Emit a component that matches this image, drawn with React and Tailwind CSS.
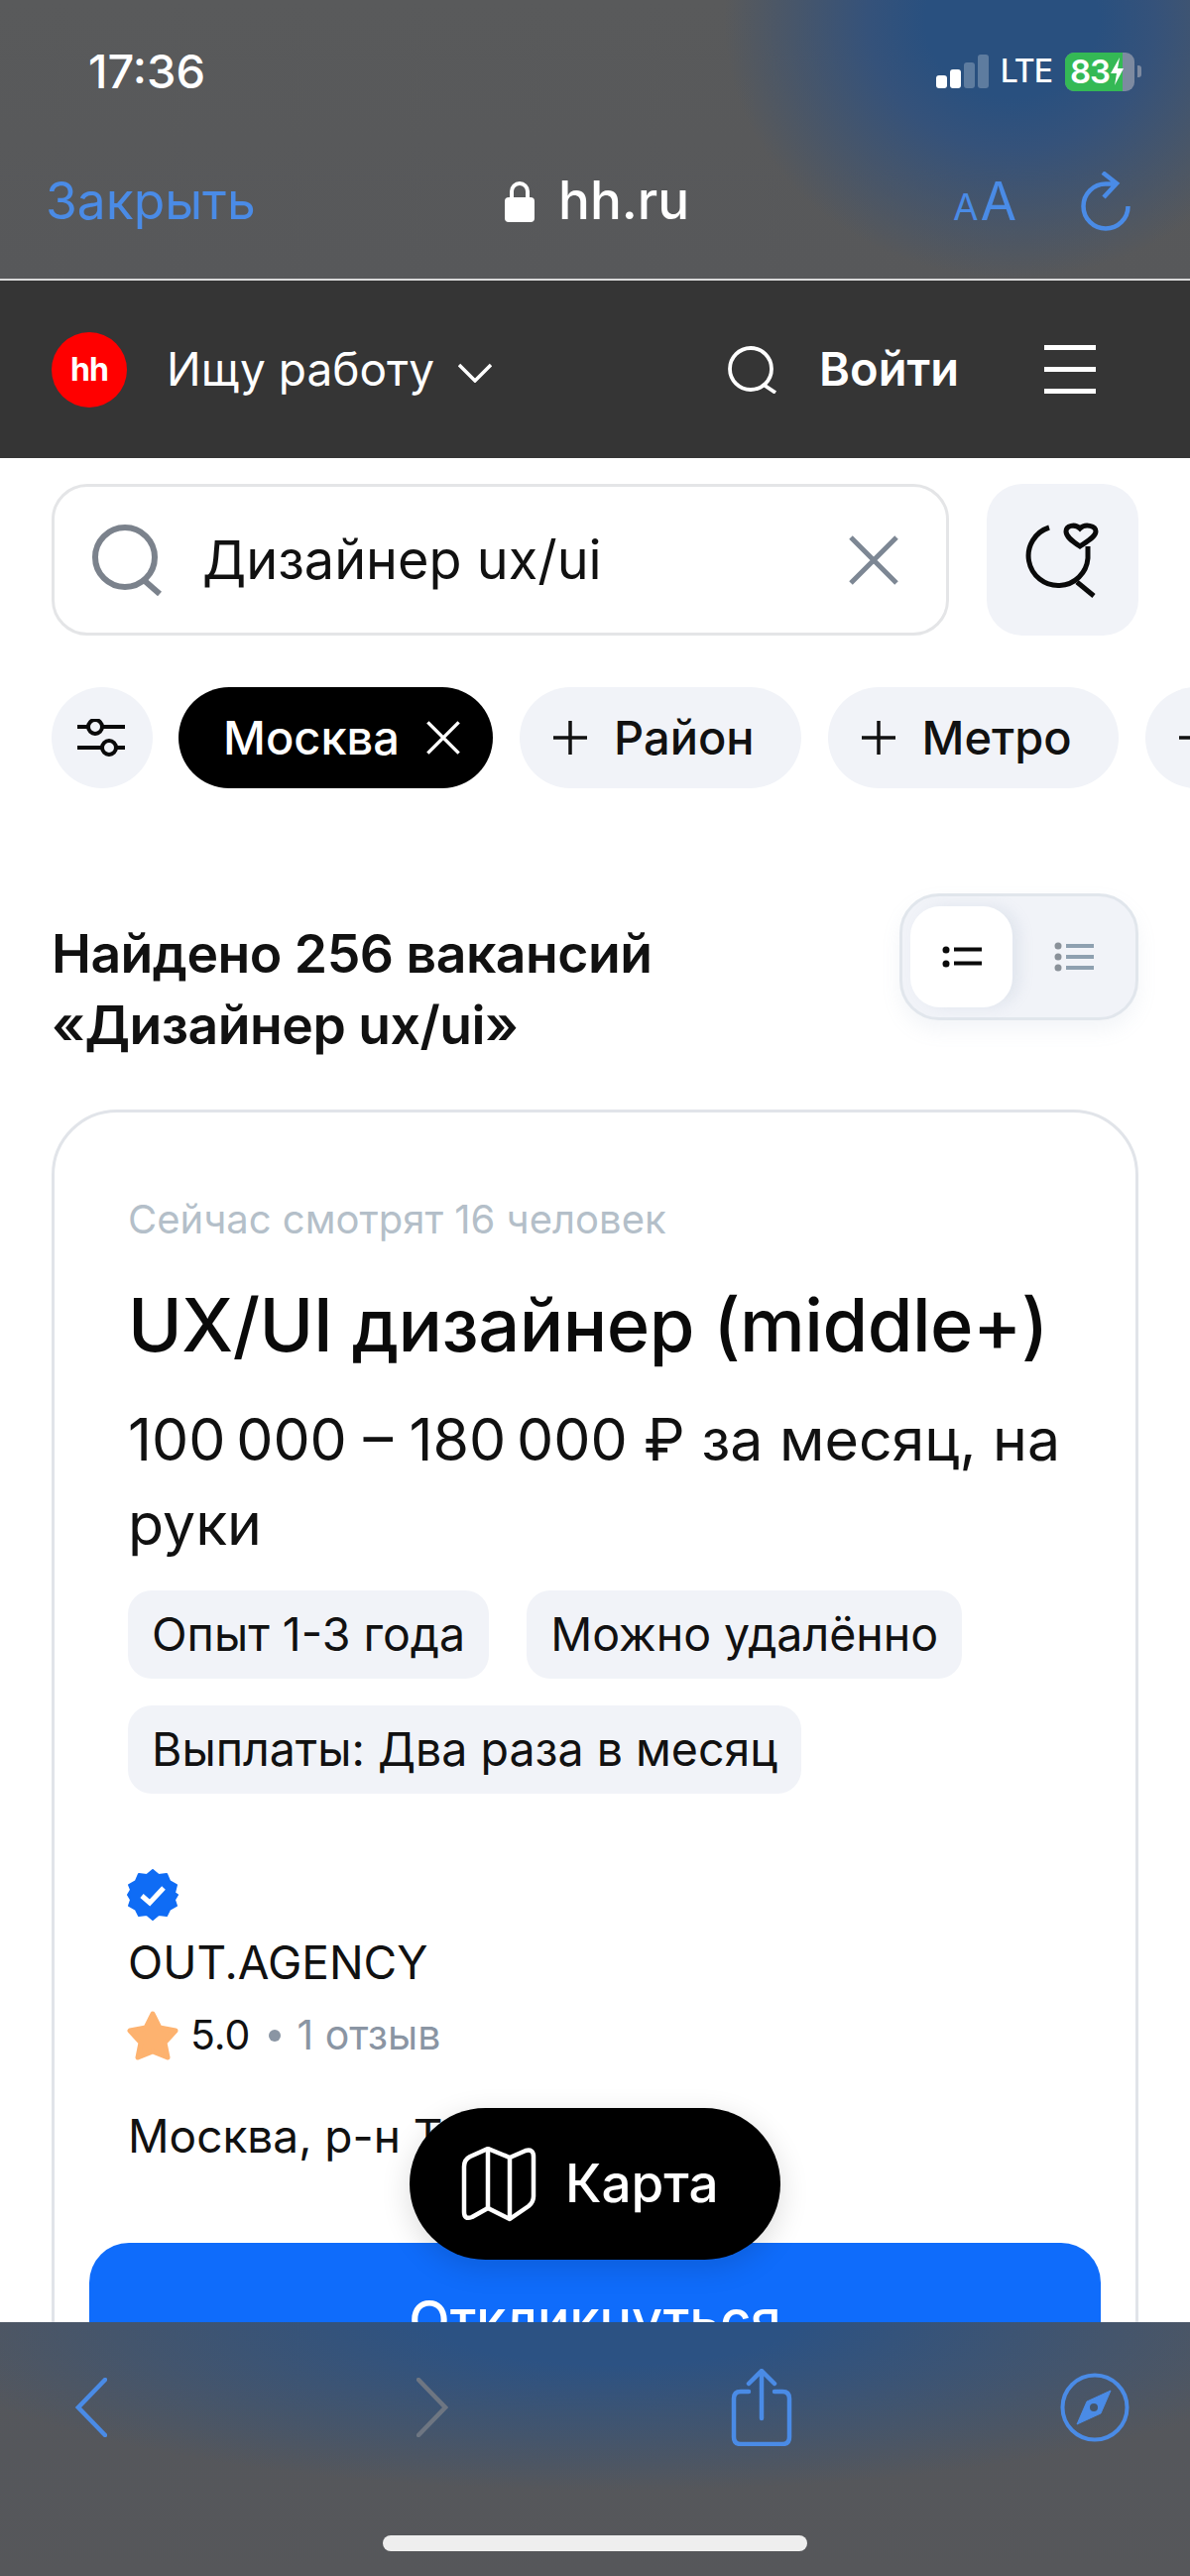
import { useState } from "react";

const Cross = ({ size, color, width }) => (
  <svg width={size} height={size} viewBox="0 0 50 50" fill="none" stroke={color} strokeWidth={width} className="shrink-0">
    <path d="M2 2 L48 48 M48 2 L2 48" />
  </svg>
);

const PlusMark = () => (
  <svg width="34" height="34" viewBox="0 0 34 34" fill="none" stroke="#111" strokeWidth="3.5" className="shrink-0">
    <path d="M17 0 V34 M0 17 H34" />
  </svg>
);

const SignalBars = () => (
  <div className="flex items-end gap-[3px] h-[34px]">
    <div className="w-[11px] h-[13px] rounded-[3px] bg-white" />
    <div className="w-[11px] h-[19px] rounded-[3px] bg-white" />
    <div className="w-[11px] h-[26px] rounded-[3px] bg-white/25" />
    <div className="w-[11px] h-[34px] rounded-[3px] bg-white/25" />
  </div>
);

const Battery = () => (
  <div className="flex items-center ml-[13px]">
    <div className="relative w-[70px] h-[39px] rounded-[9px] bg-[#7d8aa0]">
      <div className="w-[58px] h-full rounded-l-[9px] bg-[#34b955]" />
      <div className="absolute inset-0 flex items-center pl-[5px] text-white text-[33px] leading-none font-semibold tracking-[-1px]">
        83
        <svg width="15" height="28" viewBox="0 0 15 28">
          <path d="M10 0 L1 16 H7 L5 28 L14 11 H8 Z" fill="#fff" />
        </svg>
      </div>
    </div>
    <div className="w-[4px] h-[12px] ml-[3px] rounded-r-[3px] bg-[#7d8aa0]" />
  </div>
);

const TopBar = () => (
  <div className="h-[283px] border-b-[2px] border-[#d9d9d9] bg-[radial-gradient(ellipse_290px_260px_at_1020px_20px,#29507f_30%,#35527a_50%,transparent_100%),linear-gradient(#595a5b,#57585a)]">
    <div className="h-[144px] pl-[89px] pr-[49px] flex items-center justify-between">
      <span className="text-white text-[47px] font-medium">17:36</span>
      <div className="flex items-center">
        <SignalBars />
        <span className="ml-[12px] text-white text-[32px] font-medium tracking-[-1px]">LTE</span>
        <Battery />
      </div>
    </div>
    <div className="h-[118px] pl-[46px] pr-[60px] flex items-center">
      <span className="w-[463px] shrink-0 text-[#4a8be6] text-[51.5px]">Закрыть</span>
      <div className="flex items-center gap-[24px] text-white">
        <svg width="30" height="42" viewBox="0 0 30 42" fill="none">
          <path d="M7 18 V11 a8 8 0 0 1 16 0 V18" stroke="#fff" strokeWidth="4" />
          <rect x="0" y="17" width="30" height="25" rx="4" fill="#fff" />
        </svg>
        <span className="text-[53px] font-medium">hh.ru</span>
      </div>
      <div className="ml-auto w-[179px] flex items-center justify-between text-[#4a8be6]">
        <span className="leading-none flex items-baseline">
          <span className="text-[37px]">A</span>
          <span className="text-[53px] ml-[2px]">A</span>
        </span>
        <svg width="50" height="60" viewBox="0 0 50 60" fill="none" stroke="#4a8be6" strokeWidth="4.5">
          <path d="M47.5 35 A22.5 22.5 0 1 1 25 12.5 H35 M22 1 L36 12 L23 26" />
        </svg>
      </div>
    </div>
  </div>
);

const Header = () => (
  <div className="h-[179px] bg-[#353535] pl-[52px] pr-[95px] flex items-center text-white">
    <div className="w-[76px] h-[76px] rounded-full bg-[#f00] flex items-center justify-center text-[32px] font-bold tracking-[-1px]">
      hh
    </div>
    <span className="ml-[40px] text-[46px]">Ищу работу</span>
    <svg width="34" height="20" viewBox="0 0 34 20" fill="none" stroke="#fff" strokeWidth="3.5" className="ml-[24px] mt-[6px]">
      <path d="M1 2 L17 18 L33 2" />
    </svg>
    <svg width="50" height="48" viewBox="0 0 50 48" fill="none" stroke="#fff" strokeWidth="3.8" className="ml-auto">
      <circle cx="23" cy="23" r="21" />
      <path d="M36 39 L48 47" />
    </svg>
    <span className="ml-[42px] text-[47px] font-semibold">Войти</span>
    <div className="ml-[86px] w-[52px] flex flex-col gap-[17px]">
      <div className="h-[5px] bg-white" />
      <div className="h-[5px] bg-white" />
      <div className="h-[5px] bg-white" />
    </div>
  </div>
);

const SearchRow = () => {
  const [query] = useState("Дизайнер ux/ui");
  return (
    <div className="mt-[26px] pl-[52px] pr-[52px] flex gap-[38px]">
      <div className="w-[905px] h-[153px] rounded-[36px] border-[3px] border-[#e4e5e7] flex items-center pl-[38px] pr-[48px]">
        <svg width="72" height="72" viewBox="0 0 72 72" fill="none" stroke="#7b828c" strokeWidth="6">
          <circle cx="33" cy="33" r="30" />
          <path d="M52 56 L68 70" />
        </svg>
        <span className="ml-[39px] text-[54px] text-[#111]">{query}</span>
        <div className="ml-auto">
          <Cross size={50} color="#7d8794" width="5" />
        </div>
      </div>
      <div className="w-[153px] h-[153px] rounded-[36px] bg-[#f1f3f8] flex items-center justify-center">
        <svg width="76" height="76" viewBox="0 0 76 76" fill="none" stroke="#0a0a0a" strokeWidth="5">
          <path d="M24 5 A30 30 0 1 0 63 36 V24" />
          <path d="M52 60 L69 74" />
          <path d="M55 24 C46 18 41 14 41 9 C41 3 50 1 55 6 C60 1 71 3 71 9 C71 14 64 18 55 24 Z" />
        </svg>
      </div>
    </div>
  );
};

const Chip = ({ label }) => (
  <div className="h-[102px] shrink-0 rounded-full bg-[#f1f3f8] flex items-center text-[47px] font-medium pl-[34px] pr-[47px] text-[#111]">
    <PlusMark />
    {label && <span className="ml-[27px]">{label}</span>}
  </div>
);

const ChipRow = () => (
  <div className="mt-[52px] pl-[52px] flex gap-[27px] overflow-hidden">
    <div className="w-[102px] h-[102px] shrink-0 rounded-full bg-[#f1f3f8] flex items-center justify-center">
      <svg width="50" height="38" viewBox="0 0 50 38" fill="none" stroke="#0a0a0a" strokeWidth="4">
        <path d="M0 8 H10 M26 8 H48 M0 29 H24 M40 29 H48" />
        <circle cx="18" cy="8" r="7" />
        <circle cx="32" cy="29" r="7" />
      </svg>
    </div>
    <div className="h-[102px] w-[317px] -ml-[1px] shrink-0 rounded-full bg-black text-white flex items-center text-[47px] font-medium pl-[45px]">
      Москва
      <div className="ml-[27px]">
        <Cross size={34} color="#fff" width="5" />
      </div>
    </div>
    <Chip label="Район" />
    <Chip label="Метро" />
    <Chip />
  </div>
);

const ResultsHead = () => (
  <div className="mt-[106px] pl-[52px] pr-[52px] flex justify-between items-start">
    <h1 className="pt-[25px] text-[53.5px] leading-[72px] font-semibold text-[#111] tracking-[-0.5px]">
      Найдено 256 вакансий
      <br />
      «Дизайнер ux/ui»
    </h1>
    <div className="w-[241px] h-[128px] rounded-[40px] border-[3px] border-[#e1e6ec] bg-[#f1f3f8] flex items-center pl-[8px] shadow-[0_10px_20px_rgba(140,160,190,0.1)]">
      <div className="w-[103px] h-[102px] rounded-[30px] bg-white flex items-center justify-center shadow-[8px_0_14px_rgba(140,160,190,0.15)]">
        <svg width="40" height="22" viewBox="0 0 40 22" fill="#0a0a0a">
          <circle cx="4" cy="4" r="3.5" />
          <circle cx="4" cy="18" r="3.5" />
          <rect x="12" y="1.5" width="28" height="4" />
          <rect x="12" y="15.5" width="28" height="4" />
        </svg>
      </div>
      <div className="flex-1 flex items-center justify-center">
        <svg width="40" height="30" viewBox="0 0 40 30" fill="#8ea0b0">
          <circle cx="4" cy="4" r="3.5" fill="#8a9199" />
          <circle cx="4" cy="15" r="3.5" fill="#8a9199" />
          <circle cx="4" cy="26" r="3.5" fill="#8a9199" />
          <rect x="12" y="2" width="28" height="4" />
          <rect x="12" y="13" width="28" height="4" />
          <rect x="12" y="24" width="28" height="4" />
        </svg>
      </div>
    </div>
  </div>
);

const Tag = ({ children }) => (
  <div className="h-[89px] rounded-[24px] bg-[#f1f3f8] flex items-center px-[24px] text-[46.5px] text-[#111]">
    {children}
  </div>
);

const VacancyCard = () => (
  <div className="mt-[49px] mx-[52px] w-[1096px] h-[1400px] rounded-[66px] border-[3px] border-[#e1e4e9] px-[74px] pt-[79px]">
    <div className="text-[40px] leading-[58px] text-[#b4bfc9]">Сейчас смотрят 16 человек</div>
    <div className="mt-[32px] text-[74px] leading-[90px] font-medium text-[#0a0a0a] tracking-[-0.5px] whitespace-nowrap">
      UX/UI дизайнер (middle+)
    </div>
    <div className="mt-[28px] text-[59px] leading-[85px] text-[#111]">
      100{"\u202f"}000 – 180{"\u202f"}000 ₽ за месяц, на руки
    </div>
    <div className="mt-[25px] flex flex-wrap gap-x-[38px] gap-y-[27px]">
      <Tag>Опыт 1-3 года</Tag>
      <Tag>Можно удалённо</Tag>
      <Tag>Выплаты: Два раза в месяц</Tag>
    </div>
    <svg width="52" height="52" viewBox="0 0 52 52" className="mt-[76px] -ml-[1px]">
      <path
        d="M26 1 L32 6 L40 5 L43 12 L50 16 L48 24 L51 26 L48 31 L50 37 L43 41 L40 47 L32 46 L26 51 L20 46 L12 47 L9 41 L2 37 L4 31 L1 26 L4 21 L2 16 L9 12 L12 5 L20 6 Z"
        fill="#0f6cf5"
        stroke="#0f6cf5"
        strokeWidth="2"
        strokeLinejoin="round"
      />
      <path d="M15 27 L23 34 L37 19" fill="none" stroke="#fff" strokeWidth="5" />
    </svg>
    <div className="mt-[14px] text-[46px] leading-[56px] text-[#111]">OUT.AGENCY</div>
    <div className="mt-[18px] flex items-center h-[56px]">
      <svg width="52" height="50" viewBox="0 0 52 50" className="-ml-[1px]">
        <path
          d="M26 3 L33 17 L49 20 L38 32 L41 47 L26 41 L11 47 L14 32 L3 20 L19 17 Z"
          fill="#fdb26f"
          stroke="#fdb26f"
          strokeWidth="5"
          strokeLinejoin="round"
        />
      </svg>
      <span className="ml-[12px] text-[41px] text-[#111]">5.0</span>
      <div className="ml-[19px] w-[12px] h-[12px] rounded-full bg-[#8a95a3]" />
      <span className="ml-[16px] text-[41px] text-[#8a95a3]">1 отзыв</span>
    </div>
    <div className="mt-[45px] text-[46px] leading-[56px] text-[#111] whitespace-nowrap">Москва, р-н Тверской</div>
    <div className="mt-[80px] -mx-[39px] h-[154px] rounded-[40px] bg-[#0f6cfb] flex items-center justify-center text-white text-[54px] font-medium">
      Откликнуться
    </div>
  </div>
);

const MapButton = () => (
  <div className="absolute left-[413px] top-[2126px] w-[374px] h-[153px] rounded-full bg-black text-white flex items-center pl-[52px] shadow-[0_8px_30px_rgba(0,0,0,0.14)]">
    <svg width="76" height="76" viewBox="0 0 76 76" fill="none" stroke="#fff" strokeWidth="4.5" strokeLinejoin="round">
      <path d="M3 20 Q3 13 9 10 L27 2 L49 11 L65 4 Q73 2 73 10 L73 50 Q73 56 68 60 L49 73 L27 62 L11 71 Q3 74 3 66 Z" />
      <path d="M27 2 V62 M49 11 V73" />
    </svg>
    <span className="ml-[29px] text-[53px] font-medium">Карта</span>
  </div>
);

const BottomBar = () => (
  <div className="absolute left-0 top-[2342px] w-[1200px] h-[256px] flex flex-col bg-[radial-gradient(ellipse_720px_170px_at_620px_0px,#2c5283_25%,transparent_100%),linear-gradient(#54575d,#56575a)]">
    <div className="h-[172px] pl-[76px] pr-[61px] flex items-center">
      <svg width="32" height="60" viewBox="0 0 32 60" fill="none" stroke="#4a8be6" strokeWidth="4.5" strokeLinecap="round">
        <path d="M30 2 L3 30 L30 58" />
      </svg>
      <svg width="32" height="60" viewBox="0 0 32 60" fill="none" stroke="#6e7682" strokeWidth="4.5" strokeLinecap="round" className="ml-[312px]">
        <path d="M2 2 L29 30 L2 58" />
      </svg>
      <svg width="62" height="78" viewBox="0 0 62 78" fill="none" stroke="#4a8be6" strokeWidth="4.5" strokeLinecap="round" strokeLinejoin="round" className="ml-[285px]">
        <path d="M18 23 H10 Q3 23 3 30 V69 Q3 76 10 76 H52 Q59 76 59 69 V30 Q59 23 52 23 H44" />
        <path d="M31 50 V3 M18 15 L31 2 L44 15" />
      </svg>
      <svg width="70" height="70" viewBox="0 0 70 70" fill="none" className="ml-auto">
        <circle cx="35" cy="35" r="32.5" stroke="#4a8be6" strokeWidth="4" />
        <path d="M51 18 L41 41 L17 52 L27 29 Z" fill="#4a8be6" stroke="#4a8be6" strokeWidth="1" strokeLinejoin="round" />
        <circle cx="34" cy="35" r="4" fill="#45566b" />
      </svg>
    </div>
    <div className="mt-[43px] mx-auto w-[428px] h-[16px] rounded-full bg-[#eeeeee]" />
  </div>
);

export default function App() {
  return (
    <div className="relative w-[1200px] h-[2598px] overflow-hidden bg-white font-['Inter',sans-serif]">
      <TopBar />
      <Header />
      <SearchRow />
      <ChipRow />
      <ResultsHead />
      <VacancyCard />
      <MapButton />
      <BottomBar />
    </div>
  );
}
